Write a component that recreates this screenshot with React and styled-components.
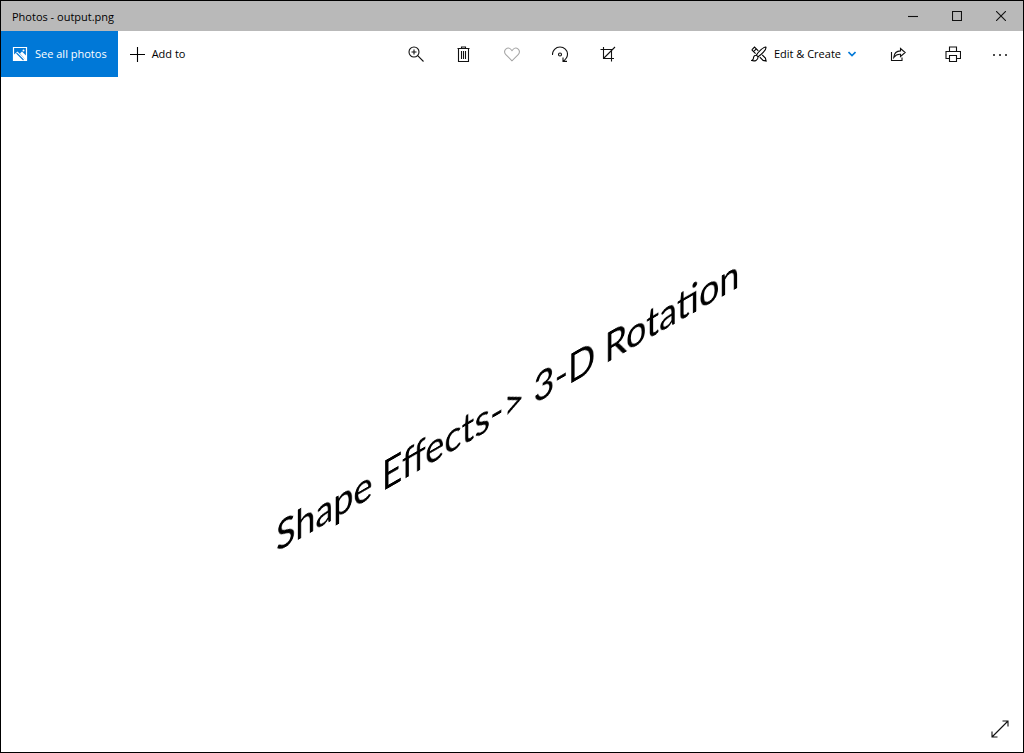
import React from "react";
import styled, { createGlobalStyle } from "styled-components";

const GlobalStyle = createGlobalStyle`
  *, *::before, *::after { box-sizing: border-box; }
  body {
    margin: 0;
    background: #fff;
    color: #000;
    font-family: "Open Sans", "Noto Sans", sans-serif;
    font-size: 11px;
    line-height: 16px;
  }
`;

const Window = styled.div`
  display: flex;
  flex-direction: column;
  min-height: 100vh;
  border: 1px solid #000;
`;

const TitleBar = styled.header`
  display: flex;
  align-items: stretch;
  justify-content: space-between;
  height: 30px;
  background: #b9b9b9;
`;

const Title = styled.h1`
  align-self: center;
  margin: 0;
  padding: 1px 0 0 11px;
  font-size: 11px;
  font-weight: 400;
`;

const Group = styled.div`
  display: flex;
  justify-content: ${({ $align }) => $align || "flex-start"};
`;

const IconButton = styled.button`
  display: flex;
  align-items: center;
  justify-content: center;
  width: ${({ $width }) => $width}px;
  padding: 0;
  border: 0;
  background: transparent;
  color: ${({ $muted }) => ($muted ? "#a6a6a6" : "#111")};
`;

const Toolbar = styled.nav`
  display: grid;
  grid-template-columns: 1fr auto 1fr;
  height: 46px;
`;

const LabelButton = styled.button`
  display: flex;
  align-items: center;
  gap: 7px;
  padding: 0 11px;
  border: 0;
  background: ${({ $primary }) => ($primary ? "#0078d7" : "transparent")};
  color: ${({ $primary }) => ($primary ? "#fff" : "#000")};
  font: inherit;
  white-space: nowrap;
`;

const Glyph = styled.svg`
  display: block;
  flex: none;
  fill: none;
  stroke: currentColor;
  stroke-width: 1.1;
`;

const Chevron = styled(Glyph)`
  color: #0078d7;
  stroke-width: 1.6;
`;

const Viewer = styled.main`
  display: flex;
  flex: 1;
  flex-direction: column;
`;

const Picture = styled.figure`
  display: flex;
  flex: 1;
  align-items: center;
  justify-content: center;
  margin: 0;
  padding: 24px 8px 0 0;
`;

/* Isometric projection, as the shape effect itself applies it. */
const IsometricText = styled.p`
  margin: 0;
  font-family: Lato, sans-serif;
  font-size: 51px;
  line-height: 60px;
  white-space: nowrap;
  transform: rotateX(-35deg) rotateY(45deg);
`;

const ViewerFooter = styled.footer`
  display: flex;
  justify-content: flex-end;
  height: 46px;
`;

const Icon = ({ size = 16, children, ...rest }) => (
  <Glyph width={size} height={size} viewBox={`0 0 ${size} ${size}`} aria-hidden="true" {...rest}>
    {children}
  </Glyph>
);

const PhotoIcon = () => (
  <Icon>
    <path d="M1.5 1.5h13v13h-13z" strokeWidth="1.2" />
    <path d="M2 8.500L5.500 5.500l8.500 8.500H2zM8 7.500l2-2 4 4v4.500z" fill="currentColor" stroke="none" />
    <path d="M4.500 7l7 7" stroke="#0078d7" />
    <circle cx="11.500" cy="4.500" r="1" fill="currentColor" stroke="none" />
  </Icon>
);
const PlusIcon = () => (
  <Icon><path d="M8.500 1v15M1 8.500h15" /></Icon>
);
const ZoomIcon = () => (
  <Icon>
    <circle cx="6" cy="6" r="5" />
    <path d="M6 3.5v5M3.5 6h5M9.7 9.7l5.8 5.8" />
  </Icon>
);
const TrashIcon = () => (
  <Icon>
    <path d="M1.500 2.500h12M5.500 2.500v-1.500h4v1.500M2.500 2.500v13h10v-13M5.500 5v8M7.500 5v8M9.500 5v8" />
  </Icon>
);
const HeartIcon = () => (
  <Icon>
    <path d="M8 14.800L1.600 8.400C.1 6.800.3 4.300 1.800 3.100 3.500 1.700 5.700 2 7 3.500l1 1.100 1-1.100c1.300-1.500 3.500-1.800 5.200-.4 1.500 1.200 1.700 3.700.2 5.300z" />
  </Icon>
);
const RotateIcon = () => (
  <Icon>
    <path d="M.5 9C.2 4.500 3.800 1 8 1c4.200 0 7.500 3.200 7.500 7.200 0 2.800-1.600 5.200-4.500 7M11 11.500v3.900h4" />
    <circle cx="8" cy="8.500" r="1.500" />
  </Icon>
);
const CropIcon = () => (
  <Icon>
    <path d="M3.500 1v11.500H14M.5 3.500h11V15.500M3.500 12.500L15 1" />
  </Icon>
);
const EditIcon = () => (
  <Icon strokeWidth="1">
    <path d="M.8 3.800L3.500 1.100l3.800 3.800M4.600 7.600L.8 3.800M2.600 5.600l2.700-2.700M8.800 11.200l3.300 3.200 3 .7-.7-3-3.200-3.300" />
    <path d="M14.900 1.100c-2.300-.6-7.500 4.900-9.500 8l1.700 1.700c3-2 8.600-7.200 7.800-9.700zM5.400 9.200C3.300 9 2.500 10.600 2.400 12.400c-.1 1-.8 1.600-1.700 2 3 1.100 6.400.1 6.400-3.600" />
  </Icon>
);
const ShareIcon = () => (
  <Icon>
    <path d="M1.500 6v8.500h10.500V11.500" />
    <path d="M10.500 2.500l4.700 4-4.700 4V8.200C7.500 8 5.500 9 3.800 11.300 4.200 7.500 6.500 5 10.500 4.900z" />
  </Icon>
);
const PrintIcon = () => (
  <Icon>
    <path d="M4.500 6V1h7V6M4.500 12.500H1v-7h14.500v7H12M4.500 9.500h7v6h-7z" />
  </Icon>
);
const MoreIcon = () => (
  <Icon>
    <g fill="currentColor" stroke="none">
      <circle cx="2" cy="9" r="1" /><circle cx="8" cy="9" r="1" /><circle cx="14" cy="9" r="1" />
    </g>
  </Icon>
);

export default function App() {
  return (
    <>
      <GlobalStyle />
      <Window>
        <TitleBar>
          <Title>Photos - output.png</Title>
          <Group>
            <IconButton $width={44} aria-label="Minimize">
              <Icon size={10}><path d="M0 5.500h10" /></Icon>
            </IconButton>
            <IconButton $width={44} aria-label="Maximize">
              <Icon size={10}><path d="M.5.5h9v9h-9z" /></Icon>
            </IconButton>
            <IconButton $width={44} aria-label="Close">
              <Icon size={10}><path d="M0 0l10 10M10 0L0 10" /></Icon>
            </IconButton>
          </Group>
        </TitleBar>
        <Toolbar>
          <Group>
            <LabelButton $primary><PhotoIcon />See all photos</LabelButton>
            <LabelButton><PlusIcon />Add to</LabelButton>
          </Group>
          <Group>
            <IconButton $width={48} aria-label="Zoom"><ZoomIcon /></IconButton>
            <IconButton $width={48} aria-label="Delete"><TrashIcon /></IconButton>
            <IconButton $width={48} $muted aria-label="Add to favorites"><HeartIcon /></IconButton>
            <IconButton $width={48} aria-label="Rotate"><RotateIcon /></IconButton>
            <IconButton $width={48} aria-label="Crop"><CropIcon /></IconButton>
          </Group>
          <Group $align="flex-end">
            <LabelButton>
              <EditIcon />
              Edit &amp; Create
              <Chevron width="8" height="6" viewBox="0 0 8 6" aria-hidden="true">
                <path d="M.5 1L4 4.500 7.500 1" />
              </Chevron>
            </LabelButton>
            <IconButton $width={62} aria-label="Share"><ShareIcon /></IconButton>
            <IconButton $width={48} aria-label="Print"><PrintIcon /></IconButton>
            <IconButton $width={46} aria-label="See more"><MoreIcon /></IconButton>
          </Group>
        </Toolbar>
        <Viewer>
          <Picture>
            <IsometricText>Shape Effects-&gt; 3-D Rotation</IsometricText>
          </Picture>
          <ViewerFooter>
            <IconButton $width={46} aria-label="Full screen">
              <Icon size={18}>
                <path d="M1 17L17 1M11.500 1H17v5.500M1 11.500V17h5.500" />
              </Icon>
            </IconButton>
          </ViewerFooter>
        </Viewer>
      </Window>
    </>
  );
}
